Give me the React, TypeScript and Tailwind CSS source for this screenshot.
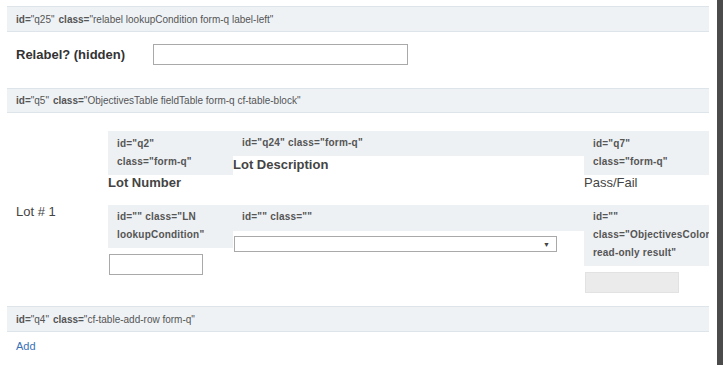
export default function App() {

  const attrBar = (id: string, cls: string) => (
    <div className="h-[26px] flex items-center px-[9px] bg-[#eef2f5] border-y border-[#dde4ea] text-[10px] text-[#555]">
      <span className="font-bold">id=</span>
      <span>"{id}"</span>
      <span className="font-bold ml-[4px]">class=</span>
      <span>"{cls}"</span>
    </div>
  );

  return (

    <div className="flex min-h-[365px] bg-white" style={{ fontFamily: '"Liberation Sans", Arial, sans-serif' }}>

      {/* CONTENUTO */}
      <main className="flex-1 pl-[7px] pr-[8px] pt-[6px]">

        {/* q25 */}
        {attrBar("q25", "relabel lookupCondition form-q label-left")}

        <div className="flex items-center mt-[12px] h-[21px] mb-[23px]">
          <div className="w-[146px] pl-[9px] text-[13px] font-bold text-[#333]">
            Relabel? (hidden)
          </div>
          <input className="w-[255px] h-[21px] border border-[#a9a9a9] bg-white" />
        </div>

        {/* q5 */}
        <div className="h-[25px] flex items-center px-[9px] bg-[#eef2f5] border-y border-[#dde4ea] text-[10px] text-[#555]">
          <span className="font-bold">id=</span>
          <span>"q5"</span>
          <span className="font-bold ml-[4px]">class=</span>
          <span>"ObjectivesTable fieldTable form-q cf-table-block"</span>
        </div>

        {/* TABELLA */}
        <div className="grid grid-cols-[101px_125px_351px_125px] mt-[18px] text-[#444]">

          <div className="row-span-2 self-center pl-[9px] text-[13px] pb-[1px]">
            Lot # 1
          </div>

          {/* HEADER */}
          <div className="flex flex-col">
            <div className="h-[44px] bg-[#eef1f4] pl-[9px] pt-[4px] text-[10px] font-bold text-[#555] leading-[18px] tracking-[0.2px]">
              <div>id="q2"</div>
              <div>class="form-q"</div>
            </div>
            <div className="text-[13px] font-bold leading-[16px]">Lot Number</div>
          </div>

          <div className="flex flex-col">
            <div className="h-[25px] bg-[#eef1f4] pl-[9px] pt-[3px] text-[10px] font-bold text-[#555] leading-[18px] tracking-[0.2px]">
              id="q24" class="form-q"
            </div>
            <div className="text-[13px] font-bold leading-[18px]">Lot Description</div>
          </div>

          <div className="flex flex-col">
            <div className="h-[44px] bg-[#eef1f4] pl-[9px] pt-[4px] text-[10px] font-bold text-[#555] leading-[18px] tracking-[0.2px]">
              <div>id="q7"</div>
              <div>class="form-q"</div>
            </div>
            <div className="text-[13px] leading-[16px]">Pass/Fail</div>
          </div>

          {/* RIGA 1 */}
          <div className="flex flex-col mt-[14px]">
            <div className="h-[43px] bg-[#eef1f4] pl-[9px] pt-[3px] text-[10px] font-bold text-[#555] leading-[18px] tracking-[0.2px]">
              <div>id="" class="LN</div>
              <div>lookupCondition"</div>
            </div>
            <input className="mt-[6px] w-[94px] h-[21px] ml-[1px] border border-[#a9a9a9] bg-white" />
          </div>

          <div className="flex flex-col mt-[14px]">
            <div className="h-[26px] bg-[#eef1f4] pl-[9px] pt-[3px] text-[10px] font-bold text-[#555] leading-[18px] tracking-[0.2px]">
              id="" class=""
            </div>
            <div className="mt-[5px] ml-[1px] w-[323px] h-[16px] border border-[#a9a9a9] bg-white flex items-center justify-end pr-[6px]">
              <span className="text-[7px] text-[#444] leading-none">▼</span>
            </div>
          </div>

          <div className="flex flex-col mt-[14px]">
            <div className="h-[61px] bg-[#eef1f4] pl-[9px] pt-[3px] text-[10px] font-bold text-[#555] leading-[18px] tracking-[0.2px] overflow-hidden whitespace-nowrap">
              <div>id=""</div>
              <div>class="ObjectivesColor</div>
              <div>read-only result"</div>
            </div>
            <div className="mt-[6px] ml-[1px] w-[94px] h-[21px] bg-[#ebebeb] border border-[#e2e2e2]" />
          </div>

        </div>

        {/* q4 */}
        <div className="mt-[13px]">
          {attrBar("q4", "cf-table-add-row form-q")}
        </div>

        <div className="mt-[7px] pl-[9px] text-[11px] text-[#3a72b8] leading-[14px]">
          Add
        </div>

      </main>

      {/* SCROLLBAR */}
      <div className="w-[6px] bg-[#4b4b4b]" />

    </div>
  );
}
